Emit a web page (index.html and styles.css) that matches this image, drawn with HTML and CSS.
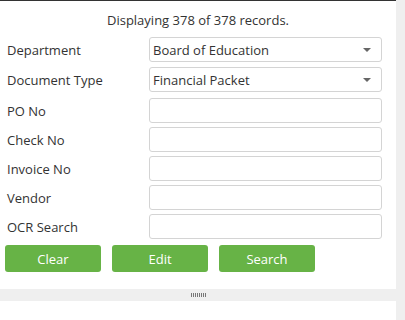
FILE: index.html
```html
<!DOCTYPE html>
<html lang="en">
<head>
  <meta charset="UTF-8">
  <title>Document Search</title>
  <link rel="stylesheet" href="styles.css">
</head>
<body>
  <div class="page">
    <div class="main">
      <div class="topline"></div>
      <div class="panel">
        <p class="count">Displaying 378 of 378 records.</p>
        <div class="form">
          <div class="row select-row">
            <label>Department</label>
            <div class="select"><span>Board of Education</span><i class="caret"></i></div>
          </div>
          <div class="row select-row last-select">
            <label>Document Type</label>
            <div class="select"><span>Financial Packet</span><i class="caret"></i></div>
          </div>
          <div class="row">
            <label>PO No</label>
            <input type="text">
          </div>
          <div class="row">
            <label>Check No</label>
            <input type="text">
          </div>
          <div class="row">
            <label>Invoice No</label>
            <input type="text">
          </div>
          <div class="row">
            <label>Vendor</label>
            <input type="text">
          </div>
          <div class="row">
            <label>OCR Search</label>
            <input type="text">
          </div>
        </div>
        <div class="actions">
          <button>Clear</button>
          <button>Edit</button>
          <button>Search</button>
        </div>
      </div>
      <div class="splitter"><span class="grip"></span></div>
      <div class="results"></div>
    </div>
    <div class="scrollbar"></div>
  </div>
</body>
</html>
```

FILE: styles.css
```css
* {
  box-sizing: border-box;
  font-family: 'Open Sans', sans-serif;
}
html, body {
  margin: 0;
  padding: 0;
  background: #fff;
  color: #333;
}
.page {
  display: flex;
  width: 405px;
  height: 320px;
  overflow: hidden;
}
.main {
  width: 396px;
  display: flex;
  flex-direction: column;
}
.scrollbar {
  flex: 1;
  background: #efefef;
}
.topline {
  height: 1px;
  background: #333;
}
.panel {
  padding: 0 0 0 5px;
}
.count {
  margin: 0;
  padding-top: 10px;
  height: 36px;
  text-align: center;
  font-size: 13px;
  line-height: 18px;
  padding-right: 5px;
}
.form {
  display: flex;
  flex-direction: column;
}
.row {
  display: flex;
  align-items: center;
  height: 25px;
  margin-bottom: 4px;
}
.row.select-row { margin-bottom: 5px; }
.row.last-select { margin-bottom: 6px; }
.row label {
  width: 144px;
  padding-left: 2px;
  font-size: 13px;
}
.row input,
.select {
  width: 233px;
  height: 25px;
  border: 1px solid #d4d4d4;
  border-radius: 3px;
  background: #fff;
  margin: 0;
}
.select {
  display: flex;
  align-items: center;
  justify-content: space-between;
  padding: 0 10px 0 3px;
  font-size: 13px;
}
.caret {
  width: 0;
  height: 0;
  border-left: 4px solid transparent;
  border-right: 4px solid transparent;
  border-top: 4px solid #666;
}
.actions {
  display: flex;
  gap: 11px;
  margin-top: 2px;
}
.actions button {
  width: 96px;
  height: 27px;
  border: none;
  border-radius: 3px;
  background: #67b346;
  color: #fff;
  font-size: 13px;
  padding: 0;
}
.splitter {
  margin-top: 17px;
  height: 12px;
  background: #efefef;
  display: flex;
  justify-content: center;
  align-items: center;
}
.grip {
  width: 15px;
  height: 4px;
  background: repeating-linear-gradient(90deg, #777 0 1px, transparent 1px 2px);
}
.results {
  flex: 1;
  background: #fff;
}
```
